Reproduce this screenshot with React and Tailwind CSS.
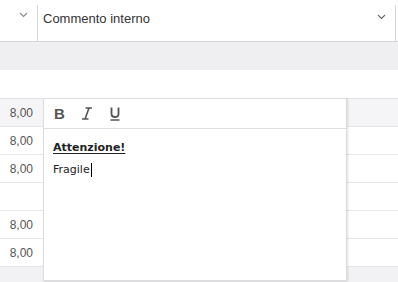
import React from "react";

function Chevron({ className }) {
  return (
    <svg width="9" height="6" viewBox="0 0 9 6" className={className}>
      <path d="M1 1 L4.5 4.5 L8 1" fill="none" stroke="currentColor" strokeWidth="1.1" />
    </svg>
  );
}

const rows = ["8,00", "8,00", "8,00", "", "8,00", "8,00"];

function Popup() {
  return (
    <div className="absolute left-[43px] top-[98px] w-[304px] h-[183px] bg-white border border-[#dcdcdc] shadow-[1px_1px_2px_rgba(0,0,0,0.12)] flex flex-col">
      <div className="h-[30px] border-b border-[#dedede] flex items-center pl-[10px] gap-[17px] text-[#555]">
        <span className="w-[10px] text-[15px] font-bold leading-none font-['Liberation_Sans']">B</span>
        <svg width="12" height="13" viewBox="0 0 12 13">
          <path d="M4.5 1 H11 M8 1 L4 12 M1 12 H7.5" fill="none" stroke="#555" strokeWidth="1.6" />
        </svg>
        <svg width="10" height="14" viewBox="0 0 10 14">
          <path d="M1.5 0.5 V7 Q1.5 10 5 10 Q8.5 10 8.5 7 V0.5" fill="none" stroke="#555" strokeWidth="1.8" />
          <path d="M0.5 13 H9.5" stroke="#555" strokeWidth="1.5" />
        </svg>
      </div>
      <div className="flex-1 pl-[9px] pt-[11px] font-['DejaVu_Sans'] text-[11px] text-[#222]">
        <p className="leading-[16px] font-bold underline underline-offset-[2px]">Attenzione!</p>
        <p className="leading-[16px] mt-[6px] flex items-center">
          Fragile
          <span className="inline-block w-px h-[14px] bg-black ml-[1px]" />
        </p>
      </div>
    </div>
  );
}

export default function App() {
  return (
    <div className="w-[398px] h-[282px] relative overflow-hidden bg-[#f2f1f4] font-['Liberation_Sans']">
      <div className="h-[42px] bg-white border-b border-[#d4d4d4] flex">
        <div className="w-[37px] flex justify-end pr-[9px] pt-[12px] text-[#8a8a8a]">
          <Chevron />
        </div>
        <div className="w-px h-[36px] mt-[5px] bg-[#d6d6d6]" />
        <div className="flex-1 flex items-start pl-[5px] pr-[9px] pt-[11px]">
          <span className="flex-1 text-[13px] text-[#333] leading-[16px]">Commento interno</span>
          <Chevron className="text-[#666] mt-[3px]" />
        </div>
        <div className="w-px h-[36px] mt-[5px] bg-[#d6d6d6]" />
        <div className="w-[2px]" />
      </div>
      <div className="h-[28px] bg-[#efeef1]" />
      <div className="h-[28px] bg-white" />
      <div className="border-t border-[#e2e2e2]">
        {rows.map((v, i) => (
          <div
            key={i}
            className={
              "h-[28px] border-b border-[#e6e6e6] flex items-center " +
              (i === 0 ? "bg-[#f5f4f7]" : "bg-white")
            }
          >
            <span className="w-[43px] text-right pr-[10px] text-[12px] text-[#555]">{v}</span>
          </div>
        ))}
      </div>
      <Popup />
    </div>
  );
}
